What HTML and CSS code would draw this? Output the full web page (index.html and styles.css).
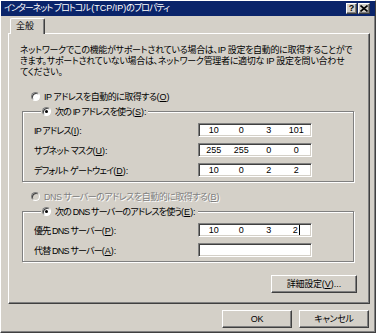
FILE: index.html
```html
<!DOCTYPE html>
<html lang="ja">
<head>
  <meta charset="UTF-8">
  <title>インターネット プロトコル (TCP/IP)のプロパティ</title>
  <link rel="stylesheet" href="styles.css">
</head>
<body>
  <div class="dialog">
    <!-- Title bar -->
    <div class="titlebar">
      <span class="title">インターネット プロトコル <span class="key">(TCP/IP)</span>のプロパティ</span>
      <div class="caption-buttons">
        <span class="cap-btn help">?</span>
        <span class="cap-btn close">
          <svg width="8" height="7" viewBox="0 0 8 7">
            <path d="M0.5 0.5 L7.5 6.5 M7.5 0.5 L0.5 6.5" stroke="#000" stroke-width="1.6" fill="none"/>
          </svg>
        </span>
      </div>
    </div>

    <!-- Tabs -->
    <div class="tabs">
      <div class="tab active">全般</div>
    </div>

    <!-- Tab panel -->
    <div class="panel">
      <p class="intro">
        <span>ネットワークでこの機能がサポートされている場合は、IP 設定を自動的に取得することがで</span>
        <span>きます。サポートされていない場合は、ネットワーク管理者に適切な IP 設定を問い合わせ</span>
        <span>てください。</span>
      </p>

      <div class="radio-row">
        <span class="radio"></span>
        <span>IP アドレスを自動的に取得する<span class="key">(<u>O</u>)</span></span>
      </div>

      <fieldset class="group">
        <legend>
          <span class="radio checked"></span>
          <span>次の IP アドレスを使う<span class="key">(<u>S</u>):</span></span>
        </legend>
        <div class="field">
          <span class="label">IP アドレス<span class="key">(<u>I</u>):</span></span>
          <div class="ip"><span>10</span><span>0</span><span>3</span><span>101</span></div>
        </div>
        <div class="field">
          <span class="label">サブネット マスク<span class="key">(<u>U</u>):</span></span>
          <div class="ip"><span>255</span><span>255</span><span>0</span><span>0</span></div>
        </div>
        <div class="field">
          <span class="label">デフォルト ゲートウェイ<span class="key">(<u>D</u>):</span></span>
          <div class="ip"><span>10</span><span>0</span><span>2</span><span>2</span></div>
        </div>
      </fieldset>

      <div class="radio-row disabled">
        <span class="radio"></span>
        <span>DNS サーバーのアドレスを自動的に取得する<span class="key">(<u>B</u>)</span></span>
      </div>

      <fieldset class="group">
        <legend>
          <span class="radio checked"></span>
          <span>次の DNS サーバーのアドレスを使う<span class="key">(<u>E</u>):</span></span>
        </legend>
        <div class="field">
          <span class="label">優先 DNS サーバー<span class="key">(<u>P</u>):</span></span>
          <div class="ip"><span>10</span><span>0</span><span>3</span><span>2<i class="caret"></i></span></div>
        </div>
        <div class="field">
          <span class="label">代替 DNS サーバー<span class="key">(<u>A</u>):</span></span>
          <div class="ip"><span></span><span></span><span></span><span></span></div>
        </div>
      </fieldset>

      <div class="panel-actions">
        <button class="btn advanced">詳細設定<span class="key">(<u>V</u>)...</span></button>
      </div>
    </div>

    <!-- Dialog buttons -->
    <div class="footer">
      <button class="btn">OK</button>
      <button class="btn">キャンセル</button>
    </div>
  </div>
</body>
</html>
```

FILE: styles.css
```css
* {
  box-sizing: border-box;
}

body {
  margin: 0;
  font-family: "Liberation Sans", "Noto Sans CJK JP", sans-serif;
  font-size: 9px;
  font-feature-settings: "palt";
  letter-spacing: -0.4px;
  color: #000;
  background: #d4d0c8;
}

/* latin accelerator keys like (O) */
.key {
  font-family: "Liberation Sans", sans-serif;
  letter-spacing: 0;
}

.dialog {
  width: 376px;
  height: 333px;
  background: #d4d0c8;
  border: 1px solid;
  border-color: #ffffff #404040 #404040 #ffffff;
  box-shadow: inset -1px -1px #808080;
}

.titlebar {
  height: 15px;
  background: #0a246a; /* classic caption blue */
  color: #ffffff;
  display: flex;
  align-items: center;
  justify-content: space-between;
  padding: 0 5px 0 3px;
}

.title {
  line-height: 15px;
  white-space: nowrap;
  letter-spacing: -1px;
}

.caption-buttons {
  display: flex;
  gap: 1px;
}

.cap-btn {
  width: 12px;
  height: 11px;
  background: #d4d0c8;
  border: 1px solid;
  border-color: #ffffff #404040 #404040 #ffffff;
  box-shadow: inset -1px -1px #808080;
  display: flex;
  align-items: center;
  justify-content: center;
  color: #000;
  font-weight: bold;
  font-size: 9px;
  line-height: 9px;
  letter-spacing: 0;
}

.cap-btn.help {
  width: 11px;
}

.tabs {
  display: flex;
  padding: 2px 0 0 9px;
}

.tab {
  position: relative;
  z-index: 1;
  width: 35px;
  height: 16px;
  margin-bottom: -1px;
  background: #d4d0c8;
  border: 1px solid;
  border-color: #ffffff #404040 transparent #ffffff;
  border-bottom: none;
  border-radius: 2px 2px 0 0;
  box-shadow: inset -1px 0 #808080;
  padding-left: 5px;
  line-height: 14px;
  letter-spacing: 0;
}

.panel {
  width: 362px;
  height: 271px;
  margin-left: 7px;
  border: 1px solid;
  border-color: #ffffff #404040 #404040 #ffffff;
  box-shadow: inset -1px -1px #808080;
  padding: 11px 0 0 0;
  display: flex;
  flex-direction: column;
}

.intro {
  margin: 0 0 0 11px;
  line-height: 11px;
  letter-spacing: -0.3px;
}

.intro span {
  display: block;
  white-space: nowrap;
}

.radio-row {
  display: flex;
  align-items: center;
  gap: 4px;
  height: 12px;
  margin: 12px 0 0 22px;
  white-space: nowrap;
  letter-spacing: -0.5px;
}

.radio-row.disabled {
  margin-top: 8px;
  color: #808080;
  text-shadow: 1px 1px #ffffff;
}

.radio {
  width: 9px;
  height: 9px;
  flex: none;
  border-radius: 50%;
  background: #ffffff;
  border: 1px solid;
  border-color: #808080 #ffffff #ffffff #808080;
  box-shadow: inset 1px 1px #404040;
  display: flex;
  align-items: center;
  justify-content: center;
}

.radio.checked::after {
  content: "";
  width: 3px;
  height: 3px;
  border-radius: 50%;
  background: #000;
}

.disabled .radio {
  background: #d4d0c8;
}

.group {
  margin: 3px 15px 0 13px;
  padding: 5px 0 4px 11px;
  border: 1px solid #808080;
  box-shadow: inset 1px 1px #ffffff, 1px 1px #ffffff;
  display: flex;
  flex-direction: column;
  gap: 6px;
  min-inline-size: 0;
}

.group legend {
  display: flex;
  align-items: center;
  gap: 4px;
  margin-left: 7px;
  padding: 0 2px 0 1px;
  height: 13px;
  background: #d4d0c8;
  white-space: nowrap;
  letter-spacing: -0.8px;
}

.field {
  display: flex;
  align-items: center;
  height: 14px;
}

.label {
  width: 164px;
  white-space: nowrap;
  letter-spacing: -0.8px;
}

.ip {
  width: 114px;
  height: 14px;
  display: flex;
  background: #ffffff;
  border: 1px solid;
  border-color: #808080 #ffffff #ffffff #808080;
  box-shadow: inset 1px 1px #404040, inset -1px -1px #d4d0c8;
  padding: 0 1px 0 1px;
  letter-spacing: 0;
}

.ip span {
  flex: 1;
  display: flex;
  align-items: center;
  justify-content: center;
  line-height: 12px;
}

.caret {
  display: inline-block;
  width: 1px;
  height: 10px;
  background: #000;
  margin-left: 1px;
}

.panel-actions {
  display: flex;
  justify-content: flex-end;
  margin: 13px 12px 0 0;
}

.btn {
  height: 18px;
  padding: 0;
  font: inherit;
  font-feature-settings: "palt";
  letter-spacing: -0.3px;
  color: #000;
  background: #d4d0c8;
  border: 1px solid;
  border-color: #ffffff #404040 #404040 #ffffff;
  box-shadow: inset -1px -1px #808080;
  border-radius: 0;
  line-height: 14px;
}

.btn.advanced {
  width: 86px;
}

.footer {
  display: flex;
  justify-content: flex-end;
  gap: 7px;
  padding: 6px 6px 0 0;
}

.footer .btn {
  width: 70px;
}
```
